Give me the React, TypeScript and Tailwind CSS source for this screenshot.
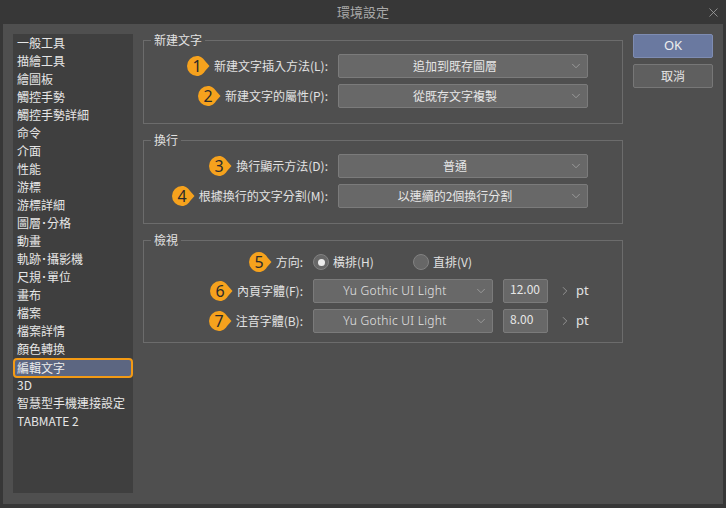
import React from 'react';
import { ChevronDown, ChevronRight, X } from 'lucide-react';

const menuItems = [
  '一般工具',
  '描繪工具',
  '繪圖板',
  '觸控手勢',
  '觸控手勢詳細',
  '命令',
  '介面',
  '性能',
  '游標',
  '游標詳細',
  '圖層･分格',
  '動畫',
  '軌跡･攝影機',
  '尺規･單位',
  '畫布',
  '檔案',
  '檔案詳情',
  '顏色轉換',
  '編輯文字',
  '3D',
  '智慧型手機連接設定',
  'TABMATE 2',
];

const Badge: React.FC<{ n: number }> = ({ n }) => (
  <svg width="23" height="20" viewBox="0 0 23 20" className="shrink-0">
    <path
      d="M10 0 C14 0 16.5 2.5 18.5 5.5 L22.5 10 L18.5 14.5 C16.5 17.5 14 20 10 20 A10 10 0 0 1 10 0 Z"
      fill="#f6a21d"
    />
    <text
      x="10"
      y="15.5"
      textAnchor="middle"
      fontSize="16"
      fill="#2b2b2b"
      fontFamily="'Noto Sans', sans-serif"
    >
      {n}
    </text>
  </svg>
);

const Select: React.FC<{ value: string; width: string; latin?: boolean }> = ({ value, width, latin }) => (
  <div
    className={`${width} h-[24px] shrink-0 relative flex items-center bg-[#686868] border border-[#7b7b7b] rounded-[2px] text-[#e6e6e6]`}
  >
    <span
      className={`flex-1 pr-[16px] text-center text-[12px] leading-[24px] ${
        latin ? "font-['Noto_Sans',sans-serif] font-light tracking-[0.3px]" : ''
      }`}
    >
      {value}
    </span>
    <ChevronDown size={14} strokeWidth={1.3} className="absolute right-[4px] text-[#a8a8a8]" />
  </div>
);

const Label: React.FC<{ n: number; text: string; width: string }> = ({ n, text, width }) => (
  <div className={`${width} shrink-0 flex items-center justify-end gap-[4px]`}>
    <Badge n={n} />
    <span className="text-[12px] text-[#e2e2e2] whitespace-nowrap">{text}</span>
  </div>
);

const Group: React.FC<{ title: string; className?: string; children: React.ReactNode }> = ({
  title,
  className = '',
  children,
}) => (
  <fieldset className={`border border-[#6c6c6c] px-[7px] ${className}`}>
    <legend className="px-[3px] text-[12px] leading-[12px] text-[#e2e2e2]">{title}</legend>
    {children}
  </fieldset>
);

const Radio: React.FC<{ checked?: boolean; label: string }> = ({ checked, label }) => (
  <div className="w-[100px] flex items-center gap-[4px]">
    <div className="w-[16px] h-[16px] rounded-full bg-[#676767] border border-[#828282] flex items-center justify-center">
      {checked && <div className="w-[7px] h-[7px] rounded-full bg-[#ececec]" />}
    </div>
    <span className="text-[12px] text-[#e2e2e2]">{label}</span>
  </div>
);

const FontRow: React.FC<{ n: number; label: string; size: string }> = ({ n, label, size }) => (
  <div className="flex items-center h-[24px] gap-[10px]">
    <Label n={n} text={label} width="w-[152px]" />
    <Select value="Yu Gothic UI Light" width="w-[180px]" latin />
    <div className="w-[45px] h-[24px] bg-[#686868] border border-[#7b7b7b] rounded-[2px] pl-[6px] text-[12px] leading-[18px] text-[#e6e6e6]">
      {size}
    </div>
    <div className="flex items-center gap-[4px]">
      <ChevronRight size={14} strokeWidth={1.3} className="text-[#a8a8a8]" />
      <span className="text-[13px] text-[#e2e2e2] font-['Noto_Sans',sans-serif]">pt</span>
    </div>
  </div>
);

const App: React.FC = () => {
  return (
    <div className="w-[726px] h-[508px] bg-[#373737] flex flex-col font-['Noto_Sans_CJK_TC','Noto_Sans',sans-serif] select-none">
      {/* title bar */}
      <div className="h-[24px] shrink-0 relative flex items-center justify-center">
        <span className="text-[13px] text-[#a9a9a9]">環境設定</span>
        <X size={15} strokeWidth={1.2} className="absolute right-[5px] top-[5px] text-[#a9a9a9]" />
      </div>

      {/* body */}
      <div className="flex-1 mx-[3px] mb-[4px] bg-[#4f4f4f] flex px-[10px] pt-[10px] pb-[11px] gap-[10px]">
        <div className="w-[120px] h-[459px] shrink-0 bg-[#3f3f3f]">
          {menuItems.map((item) =>
            item === '編輯文字' ? (
              <div
                key={item}
                className="h-[20px] mb-[-2px] border-2 border-[#f39a14] rounded-[4px] bg-[#5c6681] pl-[2px] text-[12px] leading-[16px] text-[#ececec] whitespace-nowrap"
              >
                {item}
              </div>
            ) : (
              <div key={item} className="h-[18px] pl-[4px] text-[12px] leading-[18px] text-[#e6e6e6] whitespace-nowrap">
                {item}
              </div>
            )
          )}
        </div>

        <div className="w-[480px] shrink-0 flex flex-col">
          <Group title="新建文字" className="pt-[8px] pb-[15px]">
            <div className="flex flex-col gap-[6px]">
              <div className="flex items-center gap-[10px]">
                <Label n={1} text="新建文字插入方法(L):" width="w-[177px]" />
                <Select value="追加到既存圖層" width="w-[250px]" />
              </div>
              <div className="flex items-center gap-[10px]">
                <Label n={2} text="新建文字的屬性(P):" width="w-[177px]" />
                <Select value="從既存文字複製" width="w-[250px]" />
              </div>
            </div>
          </Group>

          <Group title="換行" className="mt-[10px] pt-[8px] pb-[15px]">
            <div className="flex flex-col gap-[6px]">
              <div className="flex items-center gap-[10px]">
                <Label n={3} text="換行顯示方法(D):" width="w-[177px]" />
                <Select value="普通" width="w-[250px]" />
              </div>
              <div className="flex items-center gap-[10px]">
                <Label n={4} text="根據換行的文字分割(M):" width="w-[177px]" />
                <Select value="以連續的2個換行分割" width="w-[250px]" />
              </div>
            </div>
          </Group>

          <Group title="檢視" className="mt-[10px] pt-[4px] pb-[9px]">
            <div className="flex items-center h-[24px] gap-[10px]">
              <Label n={5} text="方向:" width="w-[152px]" />
              <div className="flex items-center">
                <Radio checked label="橫排(H)" />
                <Radio label="直排(V)" />
              </div>
            </div>
            <div className="mt-[5px] flex flex-col gap-[6px]">
              <FontRow n={6} label="內頁字體(F):" size="12.00" />
              <FontRow n={7} label="注音字體(B):" size="8.00" />
            </div>
          </Group>
        </div>

        <div className="w-[80px] shrink-0 flex flex-col gap-[6px]">
          <button className="h-[24px] bg-[#6a79a0] border border-[#7e8cb2] rounded-[2px] text-[13px] text-[#eeeeee] font-['Noto_Sans',sans-serif]">
            OK
          </button>
          <button className="h-[24px] bg-[#5f5f5f] border border-[#777777] rounded-[2px] text-[12px] text-[#e6e6e6]">
            取消
          </button>
        </div>
      </div>
    </div>
  );
};

export default App;
